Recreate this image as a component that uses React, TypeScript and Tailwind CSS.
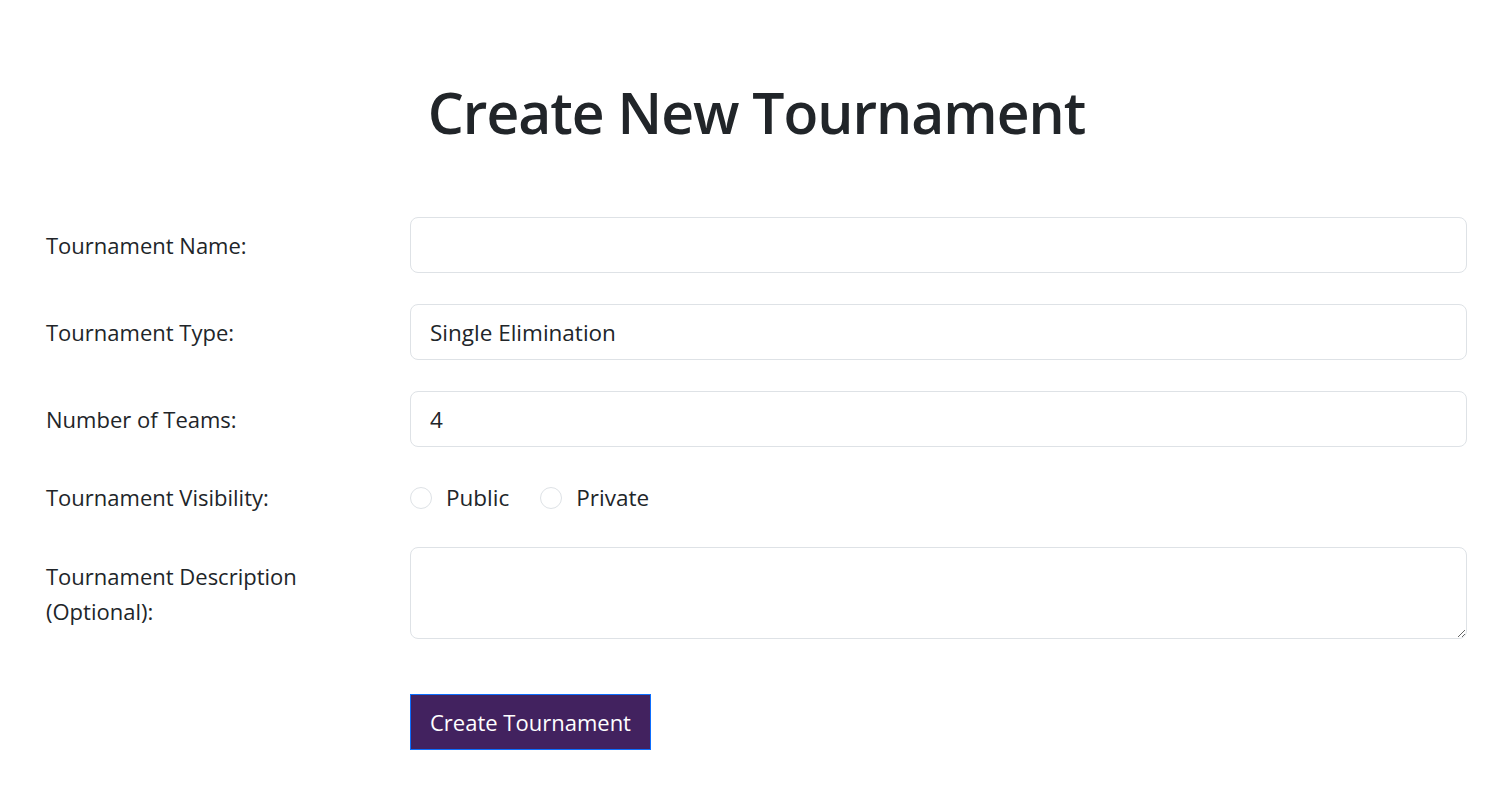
import React from "react";

const font = { fontFamily: '"Open Sans", "Noto Sans", sans-serif' };

function Row({ label, children, top = false }: { label: React.ReactNode; children: React.ReactNode; top?: boolean }) {
  return (
    <div className={`grid grid-cols-[364px_1fr] ${top ? "items-start" : "items-center"}`}>
      <label className={`text-[22px] leading-[35px] text-[#212529] ${top ? "pt-[12px]" : ""}`}>{label}</label>
      <div>{children}</div>
    </div>
  );
}

const inputCls =
  "block h-[56px] w-full rounded-[8px] border border-[#dee2e6] px-[19px] text-[22.5px] text-[#212529] outline-none";

export default function App() {
  return (
    <div className="min-h-screen bg-white pl-[46px] pr-[45px]" style={font}>
      <h1 className="pt-[76px] pb-[69px] text-center text-[57px] leading-[72px] font-semibold tracking-[-1px] text-[#212529]">
        Create New Tournament
      </h1>

      <form className="flex flex-col" onSubmit={(e) => e.preventDefault()}>
        <Row label="Tournament Name:">
          <input type="text" className={inputCls} />
        </Row>
        <div className="h-[31px]" />
        <Row label="Tournament Type:">
          <input type="text" defaultValue="Single Elimination" className={inputCls} />
        </Row>
        <div className="h-[31px]" />
        <Row label="Number of Teams:">
          <input type="text" defaultValue="4" className={inputCls} />
        </Row>
        <div className="h-[33px]" />
        <Row label="Tournament Visibility:">
          <div className="flex items-center text-[22.5px] text-[#212529]">
            <span className="h-[22px] w-[22px] rounded-full border border-[#dee2e6]" />
            <span className="ml-[14px]">Public</span>
            <span className="ml-[31px] h-[22px] w-[22px] rounded-full border border-[#dee2e6]" />
            <span className="ml-[14px]">Private</span>
          </div>
        </Row>
        <div className="h-[32px]" />
        <Row label={<>Tournament Description<br />(Optional):</>} top>
          <textarea className="block h-[92px] w-full rounded-[8px] border border-[#dee2e6] px-[19px] py-[10px] text-[22px] text-[#212529] outline-none" />
        </Row>
        <div className="h-[55px]" />
        <div className="grid grid-cols-[364px_1fr]">
          <div />
          <div>
            <button
              type="submit"
              className="h-[56px] w-[241px] border border-[#0d6efd] bg-[#42225f] text-[22px] text-white"
            >
              Create Tournament
            </button>
          </div>
        </div>
      </form>
    </div>
  );
}
